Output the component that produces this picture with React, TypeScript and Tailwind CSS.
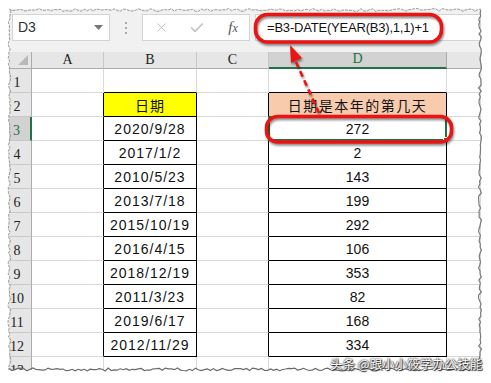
import { X, Check } from "lucide-react";

const bDates = ["2020/9/28", "2017/1/2", "2010/5/23", "2013/7/18", "2015/10/19", "2016/4/15", "2018/12/19", "2011/3/23", "2019/6/17", "2012/11/29"];
const dDays = ["272", "2", "143", "199", "292", "106", "353", "82", "168", "334"];

const cellFont = { fontFamily: '"Liberation Sans", "Noto Sans CJK SC", sans-serif' };

function jagged(x1: number, y1: number, x2: number, y2: number, seed: number) {
  const pts: string[] = [];
  const len = Math.hypot(x2 - x1, y2 - y1);
  const steps = Math.floor(len / 3);
  const nx = -(y2 - y1) / len;
  const ny = (x2 - x1) / len;
  for (let i = 0; i <= steps; i++) {
    const t = i / steps;
    const j = Math.sin(i * 12.9898 + seed * 78.233) * 43758.5453;
    const off = ((j - Math.floor(j)) - 0.5) * 3;
    pts.push(`${(x1 + (x2 - x1) * t + nx * off).toFixed(1)},${(y1 + (y2 - y1) * t + ny * off).toFixed(1)}`);
  }
  return pts.join(" ");
}

function HeaderRow() {
  const cols = ["A", "B", "C", "D", ""];
  return (
    <>
      <div className="relative h-[17px] bg-[#e6e6e6] border-r border-b border-r-[#ababab] border-b-[#ababab]">
        <svg className="absolute right-[3px] bottom-[3px]" width="10" height="10" viewBox="0 0 10 10">
          <polygon points="10,0 10,10 0,10" fill="#b9b9b9" />
        </svg>
      </div>
      {cols.map((c, i) => {
        const sel = c === "D";
        return (
          <div
            key={i}
            className={`h-[17px] flex items-end justify-center text-[14px] leading-[16px] border-r ${
              sel
                ? "bg-[#d2d2d2] text-[#217346] border-b-2 border-b-[#217346] border-r-[#ababab]"
                : "bg-[#e6e6e6] text-[#222] border-b border-b-[#ababab] border-r-[#c8c8c8]"
            }`}
            style={{ fontFamily: '"Liberation Serif", serif' }}
          >
            {c}
          </div>
        );
      })}
    </>
  );
}

function Row({ r }: { r: number }) {
  const inTable = r >= 2 && r <= 12;
  const sel = r === 3;
  const rowHead = (
    <div
      className={`h-[24px] flex items-end justify-center pr-[6px] pb-[1px] text-[14px] leading-[16px] border-b border-b-[#c8c8c8] ${
        sel ? "bg-[#d2d2d2] text-[#217346] border-r-2 border-r-[#217346]" : "bg-[#e6e6e6] text-[#222] border-r border-r-[#ababab]"
      }`}
      style={{ fontFamily: '"Liberation Serif", serif' }}
    >
      {r}
    </div>
  );
  const bVal = r === 2 ? "日期" : inTable ? bDates[r - 3] : "";
  const dVal = r === 2 ? "日期是本年的第几天" : inTable ? dDays[r - 3] : "";
  return (
    <>
      {rowHead}
      <div className={`h-[24px] border-r border-b border-b-[#d9d9d9] ${inTable ? "border-r-black" : "border-r-[#d9d9d9]"}`} />
      <div
        className={`h-[24px] flex items-center justify-center pt-[2px] text-[14px] text-[#111] tracking-[1px] border-r border-b ${
          inTable ? "border-r-black border-b-black" : r === 1 ? "border-r-[#d9d9d9] border-b-black" : "border-r-[#d9d9d9] border-b-[#d9d9d9]"
        } ${r === 2 ? "bg-[#ffff00]" : ""}`}
        style={cellFont}
      >
        {r === 2 ? <span style={{ fontFamily: '"Noto Sans CJK SC", sans-serif' }}>{bVal}</span> : bVal}
      </div>
      <div className={`h-[24px] border-r border-b border-b-[#d9d9d9] ${inTable ? "border-r-black" : "border-r-[#d9d9d9]"}`} />
      <div
        className={`relative h-[24px] flex items-center justify-center pt-[2px] text-[14px] text-[#111] border-r border-b ${
          inTable ? "border-r-black border-b-black" : r === 1 ? "border-r-[#d9d9d9] border-b-black" : "border-r-[#d9d9d9] border-b-[#d9d9d9]"
        } ${r === 2 ? "bg-[#f8cbad] tracking-[1.5px]" : ""}`}
        style={cellFont}
      >
        {r === 2 ? <span style={{ fontFamily: '"Noto Sans CJK SC", sans-serif' }}>{dVal}</span> : dVal}
        {sel && (
          <div className="absolute -left-[1px] -top-[1px] -right-[1px] -bottom-[1px] border-2 border-[#217346]">
            <div className="absolute -right-[4px] -bottom-[4px] w-[6px] h-[6px] bg-[#217346] border border-white" />
          </div>
        )}
      </div>
      <div className="h-[24px] border-r border-b border-r-[#d9d9d9] border-b-[#d9d9d9]" />
    </>
  );
}

export default function App() {
  const W = 491;
  const H = 383;
  return (
    <div className="relative w-[491px] h-[383px] bg-white overflow-hidden">
      <div className="pt-[9px] pl-[9px]">
        <div className="w-[472px] h-[361px] overflow-hidden bg-white">
          {/* formula bar */}
          <div className="h-[43px] bg-[#f1f1f1] flex items-start pt-[5px] pl-[3px]">
            <div className="w-[98px] h-[27px] bg-white border border-[#d4d4d4] flex items-center justify-between pl-[5px] pr-[6px]">
              <span className="text-[14px] text-[#333]" style={{ fontFamily: '"Liberation Sans", sans-serif' }}>
                D3
              </span>
              <svg width="9" height="5" viewBox="0 0 9 5">
                <polygon points="0,0 9,0 4.5,5" fill="#777" />
              </svg>
            </div>
            <div className="w-[32px] h-[27px] flex flex-col items-center justify-center gap-[3px]">
              <span className="w-[2px] h-[2px] bg-[#a9a9a9]" />
              <span className="w-[2px] h-[2px] bg-[#a9a9a9]" />
              <span className="w-[2px] h-[2px] bg-[#a9a9a9]" />
            </div>
            <div className="w-[108px] h-[27px] bg-white border border-[#d4d4d4] grid grid-cols-[36px_36px_36px] items-center">
              <div className="flex justify-center">
                <X size={15} strokeWidth={1.4} color="#bdbdbd" />
              </div>
              <div className="flex justify-center">
                <Check size={16} strokeWidth={2.6} color="#c4c4c4" />
              </div>
              <div className="flex justify-center">
                <span className="italic text-[15px] text-[#555]" style={{ fontFamily: '"Liberation Serif", serif' }}>
                  f<span className="text-[12px]">x</span>
                </span>
              </div>
            </div>
            <div className="ml-[5px] flex-1 h-[27px] bg-white border border-[#d4d4d4] flex items-center pl-[11px]">
              <span className="text-[13px] text-[#111] tracking-[-0.2px]" style={{ fontFamily: '"Liberation Sans", sans-serif' }}>
                =B3-DATE(YEAR(B3),1,1)+1
              </span>
            </div>
          </div>
          {/* grid */}
          <div className="grid grid-cols-[23px_72px_93px_72px_178px_34px]">
            <HeaderRow />
            {Array.from({ length: 13 }, (_, i) => (
              <Row key={i} r={i + 1} />
            ))}
          </div>
        </div>
      </div>

      {/* torn edges */}
      <svg className="absolute inset-0 pointer-events-none" width={W} height={H}>
        <polyline points={jagged(9, 10, 481, 10, 1)} fill="none" stroke="#9a9a9a" strokeWidth="1" strokeDasharray="3 1" />
        <polyline points={jagged(9.5, 10, 9.5, 370, 2)} fill="none" stroke="#9a9a9a" strokeWidth="1" strokeDasharray="3 1" />
        <polyline points={jagged(480, 10, 480, 370, 3)} fill="none" stroke="#7a7a7a" strokeWidth="1.2" />
        <polyline points={jagged(9, 369.5, 481, 369.5, 4)} fill="none" stroke="#6a6a6a" strokeWidth="1.2" />
      </svg>

      {/* annotations */}
      <svg className="absolute inset-0 pointer-events-none drop-shadow-[1px_2px_1px_rgba(0,0,0,0.45)]" width={W} height={H}>
        <rect x="255.5" y="14.5" width="186" height="27.5" rx="12" fill="none" stroke="#ec1313" strokeWidth="3.5" />
        <rect x="266.5" y="116.5" width="185" height="25.5" rx="11" fill="none" stroke="#ec1313" strokeWidth="3.5" />
        <line x1="296" y1="62" x2="319" y2="113" stroke="#ec1313" strokeWidth="2.6" strokeDasharray="6 4" />
        <polygon points="290,45 302,58 291,63" fill="#ec1313" />
      </svg>

      {/* watermark */}
      <div
        className="absolute left-[330px] top-[356px] text-[12.5px] leading-[16px] text-white whitespace-nowrap [text-shadow:0_0_1px_#333,0_0_2px_#333,1px_1px_1px_#222]"
        style={{ fontFamily: '"Noto Sans CJK SC", sans-serif' }}
      >
        头条 @跟小小筱学办公技能
      </div>
    </div>
  );
}
